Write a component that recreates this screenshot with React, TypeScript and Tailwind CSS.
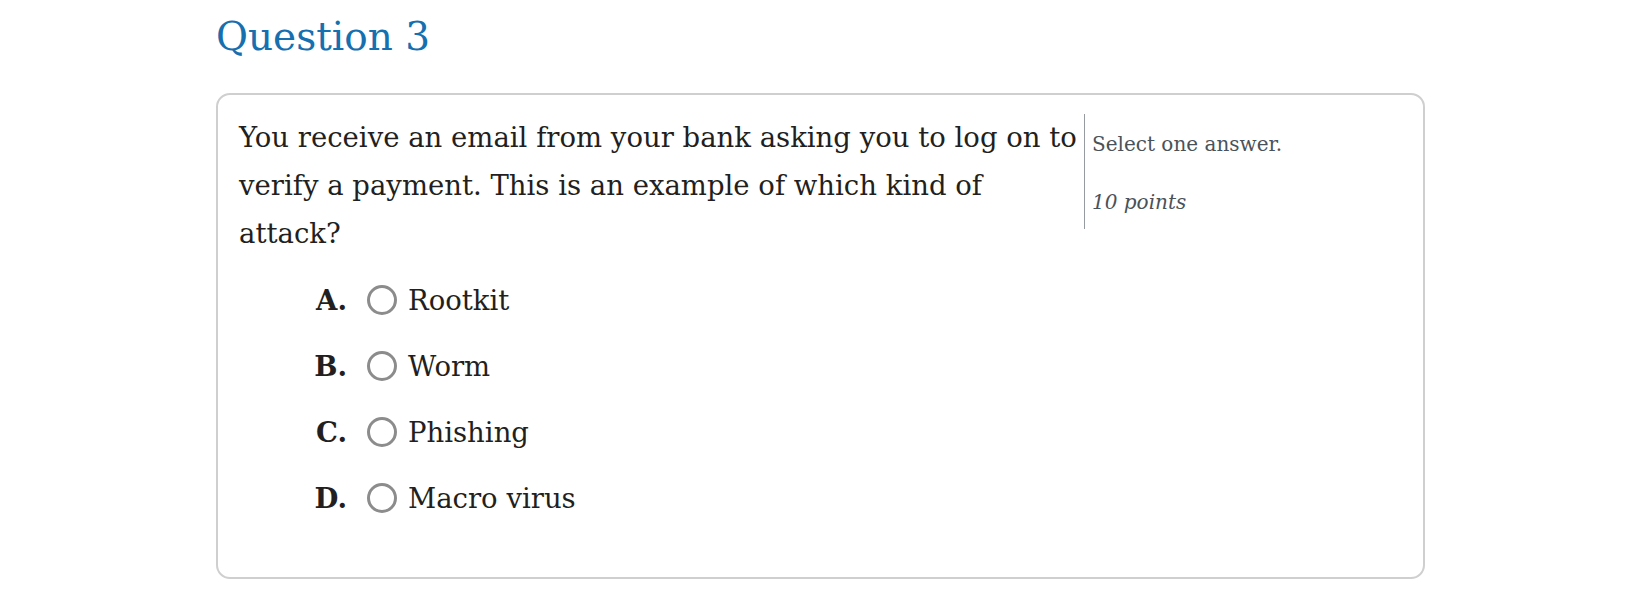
import React from "react";

const options = [
  { label: "A.", text: "Rootkit" },
  { label: "B.", text: "Worm" },
  { label: "C.", text: "Phishing" },
  { label: "D.", text: "Macro virus" },
];

export default function App() {
  return (
    <div className="w-[1640px] h-[595px] bg-white overflow-hidden" style={{ fontFamily: '"DejaVu Serif", Georgia, serif' }}>
      <div className="ml-[216px] w-[1209px]">
        <h1 className="mt-[17px] mb-[37px] text-[39px] leading-[39px] text-[#1670b0] font-normal">Question 3</h1>
        <div className="border-2 border-[#cfcfcf] rounded-[14px] h-[486px] pl-[21px] pt-[18px] flex">
          <div className="w-[845px] shrink-0">
            <p className="text-[27.5px] leading-[48px] text-[#231f20]">
              You receive an email from your bank asking you to log on to verify a payment. This is an example of which kind of attack?
            </p>
            <div className="mt-[19px] flex flex-col gap-[18px]">
              {options.map((o) => (
                <div key={o.label} className="flex items-center h-[48px] text-[27.5px] leading-[48px] text-[#231f20]">
                  <span className="w-[108px] text-right font-bold">{o.label}</span>
                  <span className="ml-[20px] w-[30px] h-[30px] rounded-full border-[3px] border-[#8c8c8c] shrink-0 mt-[-1px]" />
                  <span className="ml-[11px]">{o.text}</span>
                </div>
              ))}
            </div>
          </div>
          <div className="self-start mt-[1px] border-l border-[#959ba0] pl-[7px] pt-[16px] pb-[13px] text-[20px] leading-[28px] text-[#4a5259]">
            <div>Select one answer.</div>
            <div className="mt-[30px] italic">10 points</div>
          </div>
        </div>
      </div>
    </div>
  );
}
